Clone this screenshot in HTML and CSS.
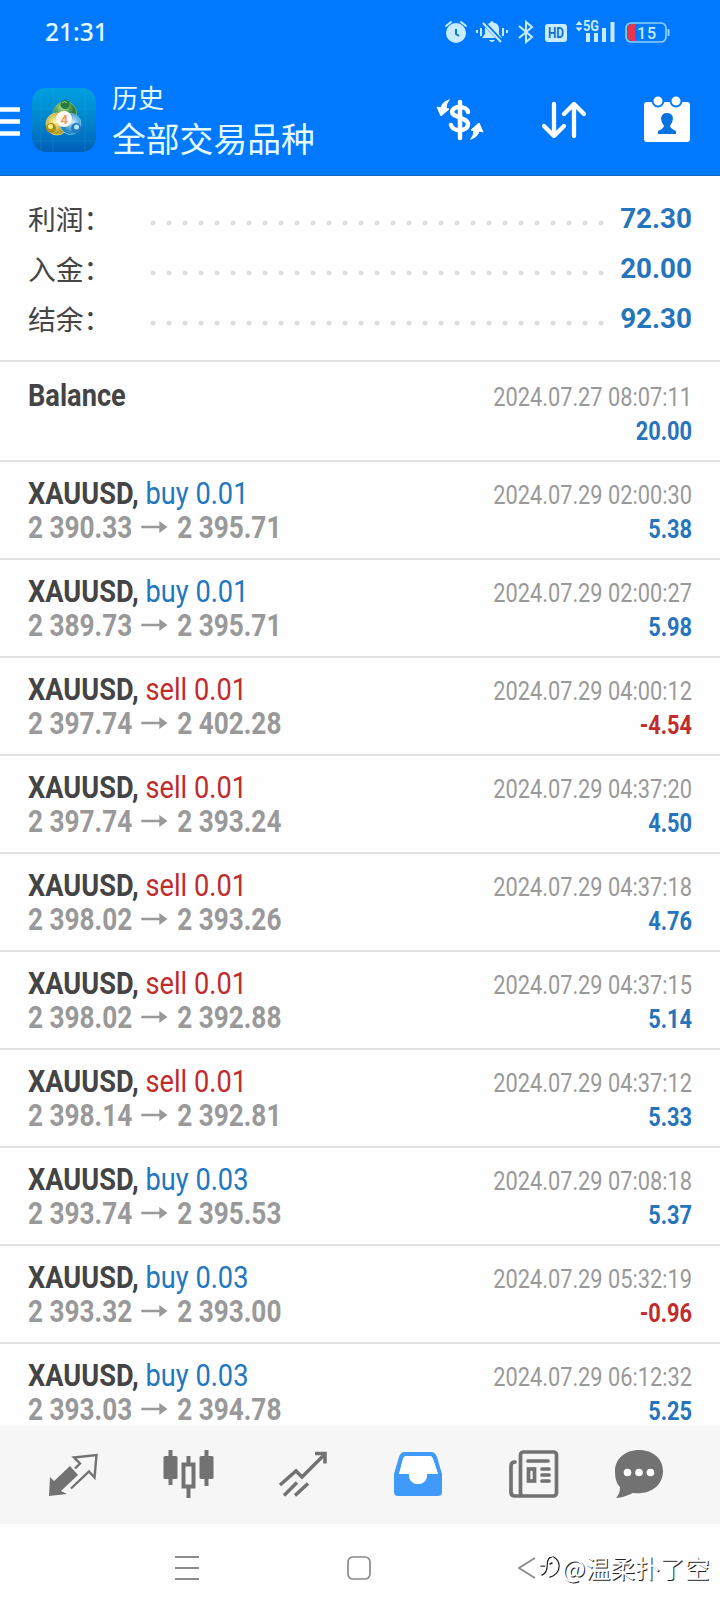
FILE: index.html
```html
<!DOCTYPE html>
<html lang="zh-CN">
<head>
<meta charset="utf-8">
<title>历史</title>
<link rel="stylesheet" href="styles.css">
</head>
<body>
<div class="screen">
  <header class="header">
    <div class="status">
      <span class="clock">21:31</span>
      <svg class="status-icons" width="230" height="30" viewBox="442 18 230 30" fill="none" stroke="#c9ebff" stroke-width="2">
        <circle cx="456" cy="33" r="10" fill="#c9ebff" stroke="none"/>
        <path d="M446 26l5-4M466 26l-5-4" stroke-linecap="round"/>
        <path d="M456 29v5l3 2" stroke="#0678ee"/>
        <path d="M482 38h20l-3-4v-6q-1-5-5-5q-2-4-4 0q-5 1-5 6v5zM489 40h6q-3 4-6 0z" fill="#c9ebff" stroke="none"/>
        <path d="M484 23l18 19" stroke="#0079ff" stroke-width="4"/>
        <path d="M483 23l18 19"/>
        <path d="M477 30v3M481 28v8M503 28v8M507 30v3"/>
        <path d="M519 26l13 11-6 5V22l6 5-13 11"/>
        <rect x="545" y="24" width="22" height="18" rx="3" fill="#c9ebff" stroke="none"/>
        <text x="548" y="38" class="hd" textLength="16" lengthAdjust="spacingAndGlyphs">HD</text>
        <path d="M575.500 25l3.500-4 3.500 4zM575.500 27.500l3.500 4 3.500-4z" fill="#c9ebff" stroke="none"/>
        <text x="583" y="31" class="net" textLength="16" lengthAdjust="spacingAndGlyphs">5G</text>
        <path d="M588 33v9M596 33v9M604 28v14M612.500 22v20" stroke-width="4"/>
        <rect x="626" y="23" width="40" height="19" rx="5" stroke="#8fd0ff" stroke-width="1.700"/>
        <path d="M628 28q0-4 4-4h3v17h-3q-4 0-4-4z" fill="#e8364f" stroke="none"/>
        <path d="M668.500 29v7" stroke="#8fd0ff"/>
        <text x="637" y="38.500" class="batt" textLength="19">15</text>
      </svg>
    </div>
    <div class="appbar">
      <svg class="menu" width="20" height="30" viewBox="0 0 20 30"><path d="M0 2.500h20M0 14.500h20M0 26.500h20" stroke="#fff" stroke-width="4.500"/></svg>
      <svg class="logo" width="64" height="64" viewBox="0 0 64 64">
        <defs>
          <linearGradient id="bg" x1="0" y1="0" x2="0" y2="1"><stop offset="0" stop-color="#00a0e0"/><stop offset=".5" stop-color="#0085cc"/><stop offset="1" stop-color="#0060b8"/></linearGradient>
          <radialGradient id="gr" cx=".4" cy=".25"><stop offset="0" stop-color="#b5e38f"/><stop offset="1" stop-color="#267a3f"/></radialGradient>
          <radialGradient id="ye" cx=".4" cy=".4"><stop offset="0" stop-color="#fff6a0"/><stop offset="1" stop-color="#b5a02b"/></radialGradient>
          <radialGradient id="bl" cx=".6" cy=".4"><stop offset="0" stop-color="#c5efff"/><stop offset="1" stop-color="#2785c7"/></radialGradient>
        </defs>
        <rect width="64" height="64" rx="14" fill="url(#bg)"/>
        <path d="M9 0v64M21 0v64M53 0v64M0 21h64M0 53h64" stroke="#37b4e0" stroke-opacity=".2"/>
        <circle cx="33" cy="25" r="11.500" fill="url(#gr)" stroke="#6db578"/>
        <circle cx="25" cy="36" r="11" fill="url(#ye)" stroke="#d6cf6e"/>
        <circle cx="38.500" cy="36" r="10.500" fill="url(#bl)" stroke="#71bde7"/>
        <circle cx="33" cy="16.500" r="4.500" fill="#277d3d"/><path d="M30 15q3-3 5 0" stroke="#93d391" fill="none"/>
        <circle cx="19" cy="40" r="5" fill="#ad8e19"/><circle cx="18.500" cy="38.500" r="2.500" fill="#f6eb83"/>
        <circle cx="44" cy="40" r="5" fill="#2179bd"/><circle cx="44.500" cy="39" r="2.500" fill="#b1e6ff"/>
        <circle cx="32" cy="31" r="8" fill="#fffaf0"/>
        <text x="28.500" y="36" class="four">4</text>
      </svg>
      <div class="titles"><div class="sub">历史</div><div class="title">全部交易品种</div></div>
      <svg class="actions" width="256" height="50" viewBox="435 94 256 50" fill="none" stroke="#fff" stroke-linecap="round" stroke-linejoin="round">
        <path d="M468 112c-1-6-15-7-16 0c0 5 16 6 16 12c0 8-15 8-17 1" stroke-width="4.500"/>
        <path d="M460 102v36" stroke-width="4.500"/>
        <path d="M449 100q-7 2-8 8l-4-1 4 9 8-7-3-.500q0-5 3-8.500zM471 139q7-2 8-8l4 1-4-9-8 7 3 .500q0 5-3 8.500z" fill="#fff" stroke-width="1"/>
        <path d="M554 104v32M544 126l10 10 10-10M574 136v-32M564 114l10-10 10 10" stroke-width="4.300"/>
        <rect x="644" y="102" width="46" height="40" rx="3" fill="#fff" stroke="none"/>
        <circle cx="658" cy="101" r="5.500" fill="#fff" stroke="#0079ff" stroke-width="2"/>
        <circle cx="676" cy="101" r="5.500" fill="#fff" stroke="#0079ff" stroke-width="2"/>
        <path d="M658 134v-3q5-2 6-5-3-4-3-8 1-5 6-5t6 5q0 4-3 8 1 3 6 5v3z" fill="#0872df" stroke="none"/>
      </svg>
    </div>
  </header>

  <section class="summary">
    <div class="sum"><span class="label">利润：</span><span class="dots"></span><span class="total">72.30</span></div>
    <div class="sum"><span class="label">入金：</span><span class="dots"></span><span class="total">20.00</span></div>
    <div class="sum"><span class="label">结余：</span><span class="dots"></span><span class="total">92.30</span></div>
  </section>

  <main class="list">
    <div class="deal first"><div class="left"><div class="name">Balance</div></div><div class="right"><div class="date">2024.07.27 08:07:11</div><div class="value">20.00</div></div></div>
    <div class="deal"><div class="left"><div class="name">XAUUSD, <span class="buy">buy 0.01</span></div><div class="price">2 390.33<svg class="arrow" viewBox="0 0 32 12"><path d="M0 6h24"/><path d="M22 0l10 6-10 6z"/></svg>2 395.71</div></div><div class="right"><div class="date">2024.07.29 02:00:30</div><div class="value">5.38</div></div></div>
    <div class="deal"><div class="left"><div class="name">XAUUSD, <span class="buy">buy 0.01</span></div><div class="price">2 389.73<svg class="arrow" viewBox="0 0 32 12"><path d="M0 6h24"/><path d="M22 0l10 6-10 6z"/></svg>2 395.71</div></div><div class="right"><div class="date">2024.07.29 02:00:27</div><div class="value">5.98</div></div></div>
    <div class="deal"><div class="left"><div class="name">XAUUSD, <span class="sell">sell 0.01</span></div><div class="price">2 397.74<svg class="arrow" viewBox="0 0 32 12"><path d="M0 6h24"/><path d="M22 0l10 6-10 6z"/></svg>2 402.28</div></div><div class="right"><div class="date">2024.07.29 04:00:12</div><div class="value loss">-4.54</div></div></div>
    <div class="deal"><div class="left"><div class="name">XAUUSD, <span class="sell">sell 0.01</span></div><div class="price">2 397.74<svg class="arrow" viewBox="0 0 32 12"><path d="M0 6h24"/><path d="M22 0l10 6-10 6z"/></svg>2 393.24</div></div><div class="right"><div class="date">2024.07.29 04:37:20</div><div class="value">4.50</div></div></div>
    <div class="deal"><div class="left"><div class="name">XAUUSD, <span class="sell">sell 0.01</span></div><div class="price">2 398.02<svg class="arrow" viewBox="0 0 32 12"><path d="M0 6h24"/><path d="M22 0l10 6-10 6z"/></svg>2 393.26</div></div><div class="right"><div class="date">2024.07.29 04:37:18</div><div class="value">4.76</div></div></div>
    <div class="deal"><div class="left"><div class="name">XAUUSD, <span class="sell">sell 0.01</span></div><div class="price">2 398.02<svg class="arrow" viewBox="0 0 32 12"><path d="M0 6h24"/><path d="M22 0l10 6-10 6z"/></svg>2 392.88</div></div><div class="right"><div class="date">2024.07.29 04:37:15</div><div class="value">5.14</div></div></div>
    <div class="deal"><div class="left"><div class="name">XAUUSD, <span class="sell">sell 0.01</span></div><div class="price">2 398.14<svg class="arrow" viewBox="0 0 32 12"><path d="M0 6h24"/><path d="M22 0l10 6-10 6z"/></svg>2 392.81</div></div><div class="right"><div class="date">2024.07.29 04:37:12</div><div class="value">5.33</div></div></div>
    <div class="deal"><div class="left"><div class="name">XAUUSD, <span class="buy">buy 0.03</span></div><div class="price">2 393.74<svg class="arrow" viewBox="0 0 32 12"><path d="M0 6h24"/><path d="M22 0l10 6-10 6z"/></svg>2 395.53</div></div><div class="right"><div class="date">2024.07.29 07:08:18</div><div class="value">5.37</div></div></div>
    <div class="deal"><div class="left"><div class="name">XAUUSD, <span class="buy">buy 0.03</span></div><div class="price">2 393.32<svg class="arrow" viewBox="0 0 32 12"><path d="M0 6h24"/><path d="M22 0l10 6-10 6z"/></svg>2 393.00</div></div><div class="right"><div class="date">2024.07.29 05:32:19</div><div class="value loss">-0.96</div></div></div>
    <div class="deal"><div class="left"><div class="name">XAUUSD, <span class="buy">buy 0.03</span></div><div class="price">2 393.03<svg class="arrow" viewBox="0 0 32 12"><path d="M0 6h24"/><path d="M22 0l10 6-10 6z"/></svg>2 394.78</div></div><div class="right"><div class="date">2024.07.29 06:12:32</div><div class="value">5.25</div></div></div>
  </main>

  <nav class="tabs">
    <svg width="50" height="50" viewBox="48 1449 50 50"><path d="M50 1477l4 4 16-15 8 9-17 16 6 3-18 2z" fill="#727272"/><path d="M71 1488.500l18-17 5.500 6L96.500 1455 74 1457.500l6 6-5 5" fill="none" stroke="#727272" stroke-width="2.400"/></svg>
    <svg width="52" height="50" viewBox="163 1449 52 50"><path d="M170.500 1450v35M206.500 1450v36M188.500 1456v8M188.500 1488v10" stroke="#727272" stroke-width="4"/><rect x="163.500" y="1456" width="14" height="23" rx="1.500" fill="#727272"/><rect x="199.500" y="1456" width="14" height="23" rx="1.500" fill="#727272"/><rect x="183.500" y="1464.500" width="10" height="22" fill="#f6f6f6" stroke="#727272" stroke-width="4"/></svg>
    <svg width="50" height="50" viewBox="278 1449 50 50" fill="none" stroke="#727272" stroke-width="3.500"><path d="M280 1485l16-14 6 6 23-23M315 1453.500h10v10M284 1495.500l13-13M295 1495.500l13-12"/></svg>
    <svg width="50" height="50" viewBox="393 1449 50 50"><path d="M404 1452h27q4 0 6 5l5 17v18q0 4-4 4h-40q-4 0-4-4v-18l5-17q2-5 5-5zM406 1456q-2 0-3 3l-4 15h10v3q2 7 9 7t9-7v-3h11l-5-15q-1-3-3-3z" fill="#409afa" fill-rule="evenodd"/><path d="M406 1456q-2 0-3 3l-4 15h10v3q2 7 9 7t9-7v-3h11l-5-15q-1-3-3-3z" fill="#fff"/></svg>
    <svg width="52" height="50" viewBox="508 1449 52 50" fill="none" stroke="#727272" stroke-width="3.700"><rect x="520.500" y="1452" width="36" height="44" rx="3"/><path d="M515 1462q-4 0-4 4v26q0 4 4 4h6M528 1461h20M542 1469h7M542 1475h7M542 1481h7" stroke-linecap="round"/><rect x="528.500" y="1469" width="6" height="12"/></svg>
    <svg width="50" height="50" viewBox="614 1449 50 50"><path d="M639 1450c14 0 24 9 24 21 0 15-13 24-30 22-5 2-11 5-17 5 3-3 4-7 4-11-4-4-5-10-5-16 0-12 10-21 24-21z" fill="#727272"/><circle cx="627.500" cy="1472.500" r="3.800" fill="#fff"/><circle cx="639" cy="1472.500" r="3.800" fill="#fff"/><circle cx="650.500" cy="1472.500" r="3.800" fill="#fff"/></svg>
  </nav>

  <footer class="sysnav">
    <svg width="24" height="26" viewBox="0 0 24 26"><path d="M0 2h24M0 13h24M0 24h24" stroke="#8b8b8b" stroke-width="1.800"/></svg>
    <svg width="24" height="26" viewBox="0 0 24 26"><rect x="1" y="2" width="22" height="22" rx="5" fill="none" stroke="#8b8b8b" stroke-width="1.700"/></svg>
    <svg width="18" height="26" viewBox="0 0 18 26"><path d="M17 3L1 13l16 10" fill="none" stroke="#8b8b8b" stroke-width="1.700"/></svg>
    <div class="watermark">
      <svg width="24" height="28" viewBox="0 0 24 28" fill="none" stroke-linecap="round"><path d="M3 14h4M4 23q5-2 5-9 0-9 5-9M15 5q6 3 6 9 0 8-9 11M12 12l2-1" stroke="#222" stroke-width="1.500"/><path d="M3 13h4M4 22q4-2 4-9 0-9 6-9M14 5q6 3 6 9 0 8-8 10" stroke="#fff" stroke-width="1"/></svg>
      <span>@温柔扑了空</span>
    </div>
  </footer>
</div>
</body>
</html>
```
FILE: styles.css
```css
* { box-sizing: border-box; }
body { margin: 0; background: #fff; font-family: Roboto, "Noto Sans CJK SC", sans-serif; }
svg { display: block; flex: none; }
.screen { width: 720px; height: 1612px; overflow: hidden; display: flex; flex-direction: column; background: #fefefe; }

.header { height: 176px; flex: none; background: #0079ff; border-bottom: 1px solid #1467be; color: #e4fbff; }
.status { height: 66px; padding: 18px 48px 0 45px; display: flex; justify-content: space-between; }
.clock { font: 500 24.500px/28px "Noto Sans", sans-serif; }
.hd { font: bold 14px Roboto, sans-serif; fill: #126fd2; stroke: none; }
.net { font: bold 14px Roboto, sans-serif; fill: #c9ebff; stroke: none; }
.batt { font: 500 16px Roboto, sans-serif; fill: #c9ebff; stroke: none; }
.four { font: bold 13px Roboto, sans-serif; fill: #ee9a60; }
.appbar { height: 109px; display: flex; padding-right: 29px; }
.menu { margin-top: 41px; }
.logo { margin: 22px 0 0 12px; }
.titles { margin: 15px 0 0 16px; }
.sub { font-size: 26px; line-height: 36px; }
.title { font-size: 33.800px; line-height: 47px; white-space: nowrap; }
.actions { margin: 28px 0 0 auto; }

.summary { height: 186px; flex: none; padding: 17px 28px 0; border-bottom: 2px solid #e3e3e3; }
.sum { height: 50.200px; display: flex; align-items: center; }
.label { width: 117px; font-size: 27.800px; color: #444; white-space: nowrap; }
.dots { width: 464px; height: 6px; margin-top: 9px; background: radial-gradient(circle, #dcdcdc 2px, transparent 2.800px) 0 0 / 16px 6px; }
.total { margin-left: auto; font-size: 27.800px; font-weight: 700; color: #2674bb; }

.list { flex: 1; min-height: 0; overflow: hidden; }
.deal { height: 98.050px; padding: 14px 28px 0; display: flex; justify-content: space-between; border-bottom: 2px solid #e3e3e3; }
.deal.first { height: 100px; padding-top: 16px; }
.left, .right { white-space: nowrap; line-height: 34px; }
.left { font-size: 32px; }
.right { transform: scaleX(.832); transform-origin: right; text-align: right; font-size: 26.200px; padding-top: 2px; }
.name { font-weight: 700; color: #444; transform: scaleX(.85); transform-origin: left; }
.buy { font-weight: 400; color: #2277be; }
.sell { font-weight: 400; color: #c02c2c; }
.price { display: flex; align-items: center; font-weight: 700; color: #999; transform: scaleX(.818); transform-origin: left; }
.arrow { width: 35px; height: 12px; margin: 0 10px; fill: #999; stroke: #999; stroke-width: 2.600; }
.arrow path + path { stroke: none; }
.date { color: #999; }
.value { font-weight: 700; color: #2674bb; }
.loss { color: #c02c2c; }

.tabs { height: 98px; flex: none; background: #f6f6f6; display: flex; padding: 23px 0 0 48px; }
.tabs svg + svg { margin-left: 65px; }
.tabs svg:nth-child(3) { margin-left: 63px; }
.tabs svg:last-child { margin-left: 54px; }
.sysnav { height: 88px; flex: none; position: relative; display: flex; padding-top: 31px; }
.sysnav > svg:nth-child(1) { margin-left: 175px; }
.sysnav > svg:nth-child(2) { margin-left: 148px; }
.sysnav > svg:nth-child(3) { margin-left: 147px; }
.watermark { position: absolute; left: 538px; top: 28px; display: flex; color: #fff; white-space: nowrap; font: 24.800px/30px "Noto Sans CJK SC", sans-serif; text-shadow: 1px 1px .5px #222; }
```
